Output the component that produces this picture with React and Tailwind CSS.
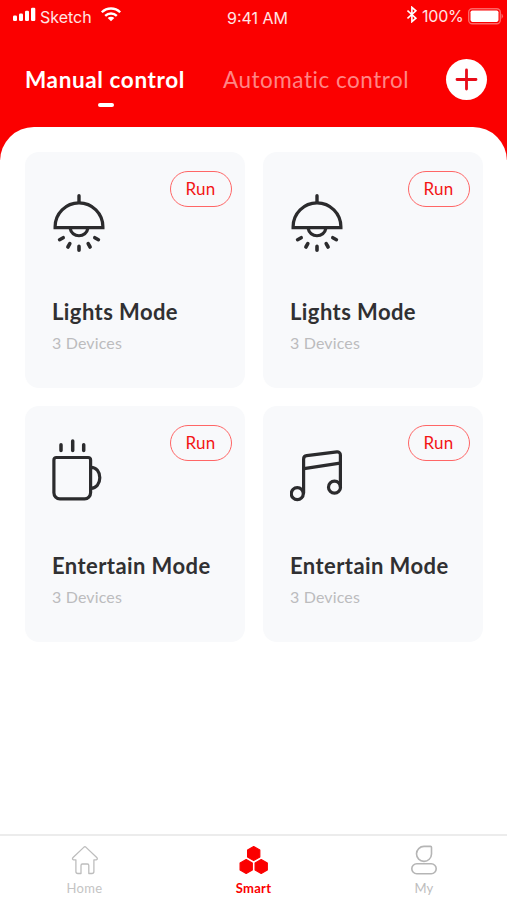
function LampIcon() {
  return (
    <svg className="w-14 h-[68px]" viewBox="0 0 56 68" fill="none" stroke="#2b2b2d" strokeWidth="3.2" strokeLinecap="round">
      <path d="M27 11.8v6" strokeWidth="3.4" />
      <path d="M3.1 43.7v-1a23.9 23.9 0 0 1 47.8 0v1z" strokeLinejoin="miter" />
      <path d="M18.2 44.5a8.9 8.5 0 0 0 17.6 0" />
      <path d="M7.6 55.7l3.6-2M15.900 63l1.900-3.400M27 62.400v3.800M38.100 63l-1.900-3.400M46.400 55.700l-3.600-2" strokeWidth="3.6" />
    </svg>
  )
}

function CupIcon() {
  return (
    <svg className="w-14 h-[68px]" viewBox="0 0 56 68" fill="none" stroke="#2b2b2d" strokeWidth="3.2" strokeLinecap="round">
      <path d="M9 6.800v5.800M20.700 3v9.600M31.700 6.800v5.800" strokeWidth="3.500" />
      <path d="M4.300 19.500h31.900a2.400 2.400 0 0 1 2.400 2.400v32.900a6 6 0 0 1-6 6H7.900a6 6 0 0 1-6-6V21.900a2.400 2.400 0 0 1 2.400-2.400z" />
      <path d="M39 29.300c5.300 0 8.800 4.600 8.800 10.500s-3.500 10.500-8.800 10.500" />
    </svg>
  )
}

function MusicIcon() {
  return (
    <svg className="w-14 h-[68px]" viewBox="0 0 56 68" fill="none" stroke="#2b2b2d" strokeWidth="3.2" strokeLinecap="round">
      <circle cx="7.300" cy="55.700" r="6" />
      <circle cx="44.500" cy="49.200" r="6" />
      <path d="M13.600 55V21.200a3.500 3.500 0 0 1 3.100-3.500l30.200-3.800a3.100 3.100 0 0 1 3.500 3.100V49" />
      <path d="M14 30.600l36-5.400" />
    </svg>
  )
}

function HomeIcon() {
  return (
    <svg className="w-7 h-[30px]" viewBox="0 0 28 30" fill="none" stroke="#bdbdbd" strokeWidth="1.300" strokeLinejoin="round">
      <path d="M13 2.100q.9-.7 1.800 0L26 12.800q1 1.600-.8 2H22.900v11.700q0 2-2 2h-3.100v-8.100q0-1.400-1.400-1.400h-5q-1.400 0-1.400 1.400v8.100H6.900q-2 0-2-2V14.800H2.600q-1.800-.4-.8-2z" />
    </svg>
  )
}

function SmartIcon() {
  return (
    <svg className="w-[30px] h-[30px] -mt-px" viewBox="0 0 30 30" fill="#fb0000" stroke="#fb0000" strokeWidth="1.200" strokeLinejoin="round">
      <path d="M14.700 1.500l6.100 3.500v6.900l-6.100 3.500-6.100-3.500V5z" />
      <path d="M7.200 14.600l6.100 3.500V25l-6.100 3.500L1.100 25v-6.900z" />
      <path d="M22.200 14.600l6.100 3.500V25l-6.100 3.500-6.100-3.500v-6.900z" />
    </svg>
  )
}

function UserIcon() {
  return (
    <svg className="w-7 h-[30px] -mt-px" viewBox="0 0 28 30" fill="none" stroke="#b5b5b5" strokeWidth="1.600" strokeLinejoin="round">
      <path d="M14 1.400h6.500q1 0 1 1V9A7.500 7.500 0 1 1 14 1.400z" />
      <rect x="1.800" y="18.800" width="24.400" height="9.900" rx="4.950" />
    </svg>
  )
}

const modes = [
  { name: 'Lights Mode',    devices: 3, Icon: LampIcon },
  { name: 'Lights Mode',    devices: 3, Icon: LampIcon },
  { name: 'Entertain Mode', devices: 3, Icon: CupIcon },
  { name: 'Entertain Mode', devices: 3, Icon: MusicIcon },
]

const tabs = [
  { label: 'Home',  Icon: HomeIcon,  style: 'text-[#c4c4c4]' },
  { label: 'Smart', Icon: SmartIcon, style: 'text-[#fb0000] font-bold' },
  { label: 'My',    Icon: UserIcon,  style: 'text-[#bdbdbd] pl-[3px]' },
]

function StatusBar() {
  return (
    <div className="flex items-start h-9 pl-[13px] pr-[3px] text-base leading-5 text-white/90 font-['Inter',sans-serif]">
      <svg className="w-[23px] h-[15px] mt-[7px]" viewBox="0 0 23 15" fill="#fff">
        <rect x="0" y="8.500" width="4" height="5.500" rx="1.200" />
        <rect x="6" y="6.500" width="4" height="7.500" rx="1.200" />
        <rect x="12" y="3.800" width="4" height="10.200" rx="1.200" />
        <rect x="18" y=".8" width="4.300" height="13.200" rx="1.200" />
      </svg>
      <span className="w-[60px] pl-1 mt-[7px]">Sketch</span>
      <svg className="w-[22px] h-[15px] ml-1 mt-[7px]" viewBox="0 0 22 15" fill="none" stroke="#fff" strokeWidth="2.300">
        <path d="M1.800 5.300a13 13 0 0 1 18.400 0M5.200 8.900a8.200 8.200 0 0 1 11.600 0" />
        <path d="M7.700 11a4.700 4.700 0 0 1 6.600 0L11 14.300z" fill="#fff" stroke="none" />
      </svg>
      <span className="ml-[105px] mt-2 whitespace-nowrap">9:41 AM</span>
      <div className="flex ml-auto">
        <svg className="w-[11px] h-[17px] mt-[6px] mr-1" viewBox="0 0 11 17" fill="none" stroke="#fff" strokeWidth="1.600">
          <path d="M.5 4.500l8.400 7.700-4 3.500V1.300l4 3.500-8.400 7.700" />
        </svg>
        <span className="w-[46px] mt-[6px] tracking-[-0.200px]">100%</span>
        <svg className="w-9 h-[17px] mt-2" viewBox="0 0 36 17">
          <rect x=".7" y=".7" width="31.600" height="15" rx="3.500" fill="none" stroke="#fff" strokeOpacity=".4" strokeWidth="1.400" />
          <rect x="2.500" y="2.500" width="28" height="11.400" rx="1.800" fill="#fff" />
          <path d="M33.500 5.500q3 2.700 0 5.400z" fill="#fff" fillOpacity=".4" />
        </svg>
      </div>
    </div>
  )
}

function ModeCard({ name, devices, Icon }) {
  return (
    <div className="flex flex-col h-[236px] rounded-[14px] bg-[#f8f9fb] pl-[27px] pr-[13px]">
      <div className="flex items-start justify-between h-[147px]">
        <div className="pt-8">
          <Icon />
        </div>
        <button className="w-[62px] h-9 mt-[19px] pr-px rounded-full border border-[#f66] text-[17px] leading-[34px] tracking-[0.300px] text-[#f31515]">
          Run
        </button>
      </div>
      <h2 className="text-[22px] leading-[26px] font-bold tracking-[0.420px] whitespace-nowrap text-[#303032]">{name}</h2>
      <p className="mt-2 text-[16px] leading-5 tracking-[0.150px] text-[#bcbcbe]">{devices} Devices</p>
    </div>
  )
}

export default function App() {
  return (
    <div className="flex flex-col w-[507px] h-[900px] overflow-hidden bg-white font-['Lato',sans-serif]">
      {/* Header */}
      <header className="h-40 shrink-0 bg-[#fb0000]">
        <StatusBar />
        <div className="flex items-start pl-[25px] pr-5">
          <div className="w-[162px] pt-[29px]">
            <div className="text-[22.500px] leading-[30px] font-bold tracking-[0.620px] whitespace-nowrap text-white">Manual control</div>
            <div className="w-4 h-1 mt-[8px] mx-auto rounded-full bg-white" />
          </div>
          <div className="ml-9 pt-[29px] text-[22.500px] leading-[30px] tracking-[0.520px] whitespace-nowrap text-[#ff8585]">Automatic control</div>
          <button className="flex items-center justify-center w-[41px] h-[41px] mt-[23px] ml-auto rounded-full bg-white">
            <svg className="w-[23px] h-[23px]" viewBox="0 0 23 23" stroke="#e80b18" strokeWidth="2.800" strokeLinecap="round">
              <path d="M11.500 2v19M2 11.500h19" />
            </svg>
          </button>
        </div>
      </header>

      {/* Mode cards */}
      <main className="grow -mt-[33px] pt-[25px] pl-[25px] pr-6 rounded-t-[34px] bg-white">
        <div className="grid grid-cols-2 gap-[18px]">
          {modes.map((mode, i) => (
            <ModeCard key={i} {...mode} />
          ))}
        </div>
      </main>

      {/* Bottom tabs */}
      <nav className="grid grid-cols-3 h-[66px] shrink-0 border-t-2 border-[#ececec] bg-white">
        {tabs.map(({ label, Icon, style }) => (
          <div key={label} className={`flex flex-col items-center justify-end pb-[4px] text-[13px] leading-4 tracking-[0.300px] ${style}`}>
            <Icon />
            <span className="mt-[5px]">{label}</span>
          </div>
        ))}
      </nav>
    </div>
  )
}
